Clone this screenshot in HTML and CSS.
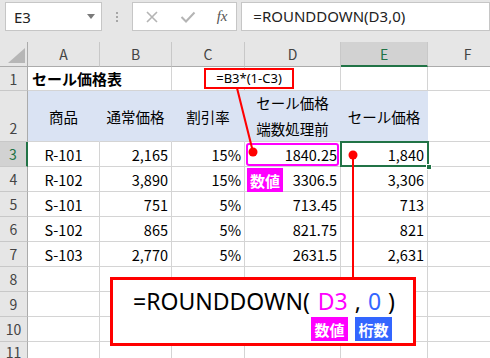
FILE: index.html
```html
<!doctype html>
<html lang="ja">
<head>
	<meta charset="UTF-8">
	<title>ROUNDDOWN</title>
	<link rel="stylesheet" href="styles.css">
</head>
<body>
<div class="page">
	<div class="toolbar">
		<div class="namebox"><span>E3</span><span class="caret"></span></div>
		<div class="grip"><span></span><span></span><span></span></div>
		<div class="fxbox">
			<svg width="14" height="14" viewBox="0 0 14 14"><path d="M2 2 L12 12 M12 2 L2 12" stroke="#b4b4b4" stroke-width="1.6" fill="none"/></svg>
			<svg width="16" height="14" viewBox="0 0 16 14"><path d="M1.5 7 L6 11.5 L14.5 2.5" stroke="#b4b4b4" stroke-width="2" fill="none"/></svg>
			<span class="fx">fx</span>
		</div>
		<div class="formula">=ROUNDDOWN(D3,0)</div>
	</div>

	<div class="sheet">
		<!-- column headers -->
		<div class="corner"><span class="tri"></span></div>
		<div class="ch">A</div>
		<div class="ch">B</div>
		<div class="ch">C</div>
		<div class="ch">D</div>
		<div class="ch sel">E</div>
		<div class="ch">F</div>

		<!-- 1 -->
		<div class="rh">1</div>
		<div class="c title span2">セール価格表</div>
		<div class="c"></div>
		<div class="c"></div>
		<div class="c"></div>
		<div class="c"></div>

		<!-- 2 -->
		<div class="rh tall">2</div>
		<div class="c fill ctr">商品</div>
		<div class="c fill ctr">通常価格</div>
		<div class="c fill ctr">割引率</div>
		<div class="c fill ctr two">セール価格<br>端数処理前</div>
		<div class="c fill ctr">セール価格</div>
		<div class="c"></div>

		<!-- 3 -->
		<div class="rh sel">3</div>
		<div class="c ctr">R-101</div>
		<div class="c num">2,165</div>
		<div class="c num">15%</div>
		<div class="c num">1840.25</div>
		<div class="c num">1,840</div>
		<div class="c"></div>

		<!-- 4 -->
		<div class="rh">4</div>
		<div class="c ctr">R-102</div>
		<div class="c num">3,890</div>
		<div class="c num">15%</div>
		<div class="c num">3306.5</div>
		<div class="c num">3,306</div>
		<div class="c"></div>

		<!-- 5 -->
		<div class="rh">5</div>
		<div class="c ctr">S-101</div>
		<div class="c num">751</div>
		<div class="c num">5%</div>
		<div class="c num">713.45</div>
		<div class="c num">713</div>
		<div class="c"></div>

		<!-- 6 -->
		<div class="rh">6</div>
		<div class="c ctr">S-102</div>
		<div class="c num">865</div>
		<div class="c num">5%</div>
		<div class="c num">821.75</div>
		<div class="c num">821</div>
		<div class="c"></div>

		<!-- 7 -->
		<div class="rh">7</div>
		<div class="c ctr">S-103</div>
		<div class="c num">2,770</div>
		<div class="c num">5%</div>
		<div class="c num">2631.5</div>
		<div class="c num">2,631</div>
		<div class="c"></div>

		<!-- 8 - 11 -->
		<div class="rh">8</div>
		<div class="c"></div><div class="c"></div><div class="c"></div><div class="c"></div><div class="c"></div><div class="c"></div>
		<div class="rh">9</div>
		<div class="c"></div><div class="c"></div><div class="c"></div><div class="c"></div><div class="c"></div><div class="c"></div>
		<div class="rh">10</div>
		<div class="c"></div><div class="c"></div><div class="c"></div><div class="c"></div><div class="c"></div><div class="c"></div>
		<div class="rh">11</div>
		<div class="c"></div><div class="c"></div><div class="c"></div><div class="c"></div><div class="c"></div><div class="c"></div>
	</div>

	<!-- annotations over the sheet -->
	<div class="cursor"><span class="handle"></span></div>
	<div class="pinkbox"></div>
	<div class="tag pink tag-d3">数値</div>

	<svg class="wires" width="490" height="358" viewBox="0 0 490 358">
		<line x1="237" y1="88" x2="253" y2="152" stroke="#ff0000" stroke-width="2"/>
		<line x1="353" y1="155" x2="353" y2="278" stroke="#ff0000" stroke-width="2"/>
		<circle cx="253" cy="152" r="4.5" fill="#ff0000"/>
		<circle cx="353" cy="155" r="4.5" fill="#ff0000"/>
	</svg>

	<div class="note">=B3*(1-C3)</div>

	<div class="callout">
		<div class="expr">=ROUNDDOWN(<span class="arg first pinktxt">D3</span>,<span class="arg bluetxt">0</span>)</div>
		<div class="tags">
			<span class="tag pink">数値</span>
			<span class="tag blue">桁数</span>
		</div>
	</div>
</div>
</body>
</html>
```

FILE: styles.css
```css
*{
	margin:0;
	padding:0;
	box-sizing:border-box;
}

body{
	width:490px;
	height:358px;
	overflow:hidden;
	background:#fff;
	font-family:"Noto Sans CJK JP","Noto Sans",sans-serif;
	color:#000;
}

.page{
	position:relative;
	width:490px;
	height:358px;
	overflow:hidden;
}

/* formula bar */
.toolbar{
	display:flex;
	align-items:flex-start;
	height:42px;
	padding:2px 0 0 5px;
	background:#e6e6e6;
}

.namebox{
	display:flex;
	align-items:center;
	justify-content:space-between;
	width:101px;
	height:29px;
	padding:0 6px 0 8px;
	background:#fff;
	border:1px solid #c6c6c6;
	font-family:"Noto Sans",sans-serif;
	font-size:15px;
	color:#222;
}

.caret{
	border-left:4px solid transparent;
	border-right:4px solid transparent;
	border-top:5px solid #7a7a7a;
}

.grip{
	display:flex;
	flex-direction:column;
	align-items:center;
	justify-content:center;
	gap:2px;
	width:31px;
	height:29px;
}

.grip span{
	width:2px;
	height:2px;
	background:#a6a6a6;
}

.fxbox{
	display:flex;
	align-items:center;
	gap:21px;
	width:110px;
	height:29px;
	padding-left:12px;
	background:#fff;
	border:1px solid #c6c6c6;
}

.fx{
	font-family:"Liberation Serif",serif;
	font-style:italic;
	font-size:15px;
	color:#555;
}

.formula{
	width:260px;
	height:29px;
	margin-left:4px;
	padding-left:11px;
	background:#fff;
	border:1px solid #c6c6c6;
	font-family:"Noto Sans",sans-serif;
	font-size:15px;
	line-height:27px;
	color:#222;
}

/* sheet */
.sheet{
	display:grid;
	grid-template-columns:28px 72px 72px 73px 96px 87px 80px;
	grid-template-rows:25px 24px 51px repeat(8,25px);
	font-size:14.5px;
}

.corner, .ch, .rh{
	display:flex;
	align-items:center;
	justify-content:center;
	background:#e6e6e6;
	color:#444;
	font-size:14px;
}

.corner{
	position:relative;
	border-right:1px solid #ababab;
	border-bottom:1px solid #ababab;
}

.tri{
	position:absolute;
	right:2px;
	bottom:3px;
	border-left:17px solid transparent;
	border-bottom:15px solid #b6b6b6;
}

.ch{
	border-right:1px solid #c8c8c8;
	border-bottom:1px solid #ababab;
}

.rh{
	border-right:1px solid #ababab;
	border-bottom:1px solid #c8c8c8;
}

.rh.tall{
	align-items:flex-end;
	padding-bottom:3px;
}

.ch.sel{
	background:#d2d2d2;
	color:#217346;
	border-bottom:2px solid #217346;
}

.rh.sel{
	background:#d2d2d2;
	color:#217346;
	border-right:2px solid #217346;
}

.c{
	display:flex;
	align-items:center;
	border-right:1px solid #d4d4d4;
	border-bottom:1px solid #d4d4d4;
	white-space:nowrap;
}

.span2{
	grid-column:span 2;
}

.title{
	padding-left:4px;
	font-weight:bold;
	font-size:15px;
}

.fill{
	background:#dae3f3;
	border-right-color:transparent;
}

.ctr{
	justify-content:center;
}

.num{
	justify-content:flex-end;
	padding-right:3px;
}

.two{
	line-height:26px;
	text-align:center;
}

/* overlays */
.cursor{
	position:absolute;
	left:340px;
	top:141px;
	width:89px;
	height:26px;
	border:2px solid #217346;
}

.handle{
	position:absolute;
	right:-5px;
	bottom:-5px;
	width:6px;
	height:6px;
	background:#217346;
	border:1px solid #fff;
}

.pinkbox{
	position:absolute;
	left:246px;
	top:143px;
	width:93px;
	height:23px;
	border:2px solid #ff00ff;
	border-radius:3px;
}

.wires{
	position:absolute;
	left:0;
	top:0;
}

.note{
	position:absolute;
	left:204px;
	top:68px;
	width:90px;
	height:21px;
	background:#fff;
	border:2px solid #ff0000;
	font-family:"Noto Sans",sans-serif;
	font-size:13px;
	line-height:17px;
	text-align:center;
}

.tag{
	display:flex;
	align-items:center;
	justify-content:center;
	width:37px;
	height:24px;
	color:#fff;
	font-weight:bold;
	font-size:15px;
}

.tag-d3{
	position:absolute;
	left:247px;
	top:168px;
	width:36px;
}

.pink{
	background:#ff00ff;
}

.blue{
	background:#3366ff;
}

.callout{
	position:absolute;
	left:110px;
	top:277px;
	width:306px;
	height:69px;
	padding:6px 0 0 20px;
	background:#fff;
	border:3px solid #ff0000;
}

.expr{
	font-family:"Noto Sans",sans-serif;
	font-size:23px;
	line-height:30px;
	white-space:nowrap;
}

.arg{
	margin:0 7px;
}

.arg.first{
	margin-left:8px;
}

.pinktxt{
	color:#ff00ff;
}

.bluetxt{
	color:#3366ff;
}

.tags{
	display:flex;
	gap:7px;
	padding-left:178px;
	margin-top:1px;
}
```
